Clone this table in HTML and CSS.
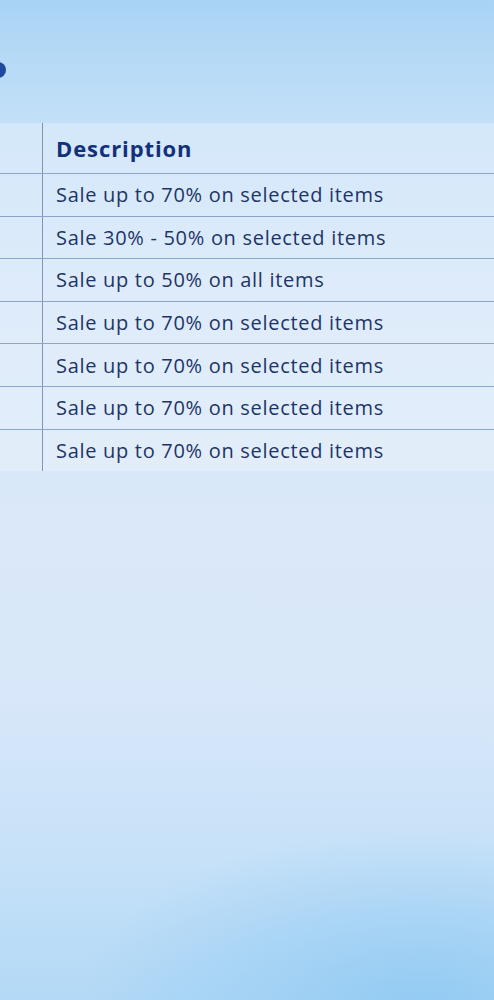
FILE: index.html
```html
<!DOCTYPE html>
<html lang="en">
<head>
<meta charset="utf-8">
<title>Sales</title>
<link rel="stylesheet" href="styles.css">
</head>
<body>
<div class="page">
  <header class="hero">
    <span class="dot"></span>
  </header>
  <div class="table-wrap">
    <table class="sales">
      <thead>
        <tr><th class="c-name"></th><th class="c-desc">Description</th></tr>
      </thead>
      <tbody>
        <tr><td class="c-name"></td><td class="c-desc">Sale up to 70% on selected items</td></tr>
        <tr><td class="c-name"></td><td class="c-desc">Sale 30% - 50% on selected items</td></tr>
        <tr><td class="c-name"></td><td class="c-desc">Sale up to 50% on all items</td></tr>
        <tr><td class="c-name"></td><td class="c-desc">Sale up to 70% on selected items</td></tr>
        <tr><td class="c-name"></td><td class="c-desc">Sale up to 70% on selected items</td></tr>
        <tr><td class="c-name"></td><td class="c-desc">Sale up to 70% on selected items</td></tr>
        <tr><td class="c-name"></td><td class="c-desc">Sale up to 70% on selected items</td></tr>
      </tbody>
    </table>
  </div>
</div>
</body>
</html>
```

FILE: styles.css
```css
html, body {
  margin: 0;
  padding: 0;
}
body {
  width: 494px;
  height: 1000px;
  overflow: hidden;
  font-family: "Open Sans", "Noto Sans", sans-serif;
  background:
    radial-gradient(ellipse 340px 170px at 420px 1000px, rgba(140, 200, 242, 0.8), rgba(140, 200, 242, 0) 100%),
    linear-gradient(180deg, #a8d3f5 0px, #b6daf6 60px, #c3dff8 122px, #d2e4f8 300px, #dae8f9 520px, #d8e7f9 700px, #c6e1f8 860px, #b3d9f6 1000px);
}
.page {
  display: flex;
  flex-direction: column;
}
.hero {
  height: 123px;
  display: flex;
  align-items: flex-start;
  padding-top: 62px;
  box-sizing: border-box;
}
.dot {
  width: 16px;
  height: 16px;
  border-radius: 50%;
  background: #1e4a9e;
  margin-left: -10px;
}
.table-wrap {
  overflow: hidden;
}
.sales {
  border-collapse: collapse;
  margin-left: -67px;
  width: 620px;
  background: rgba(255, 255, 255, 0.28);
}
.sales th,
.sales td {
  padding: 0 0 0 13px;
  text-align: left;
  vertical-align: middle;
  border-bottom: 1px solid #8ba6c8;
}
.sales tbody tr:last-child td {
  border-bottom: none;
}
.sales .c-name {
  width: 109px;
  padding: 0;
  border-right: 1px solid #7d95b8;
}
.sales th {
  height: 50px;
  font-size: 22px;
  font-weight: 700;
  color: #13307a;
  letter-spacing: 0.9px;
}
.sales td {
  height: 41.6px;
  font-size: 20px;
  color: #1d3566;
  letter-spacing: 0.7px;
}
```
